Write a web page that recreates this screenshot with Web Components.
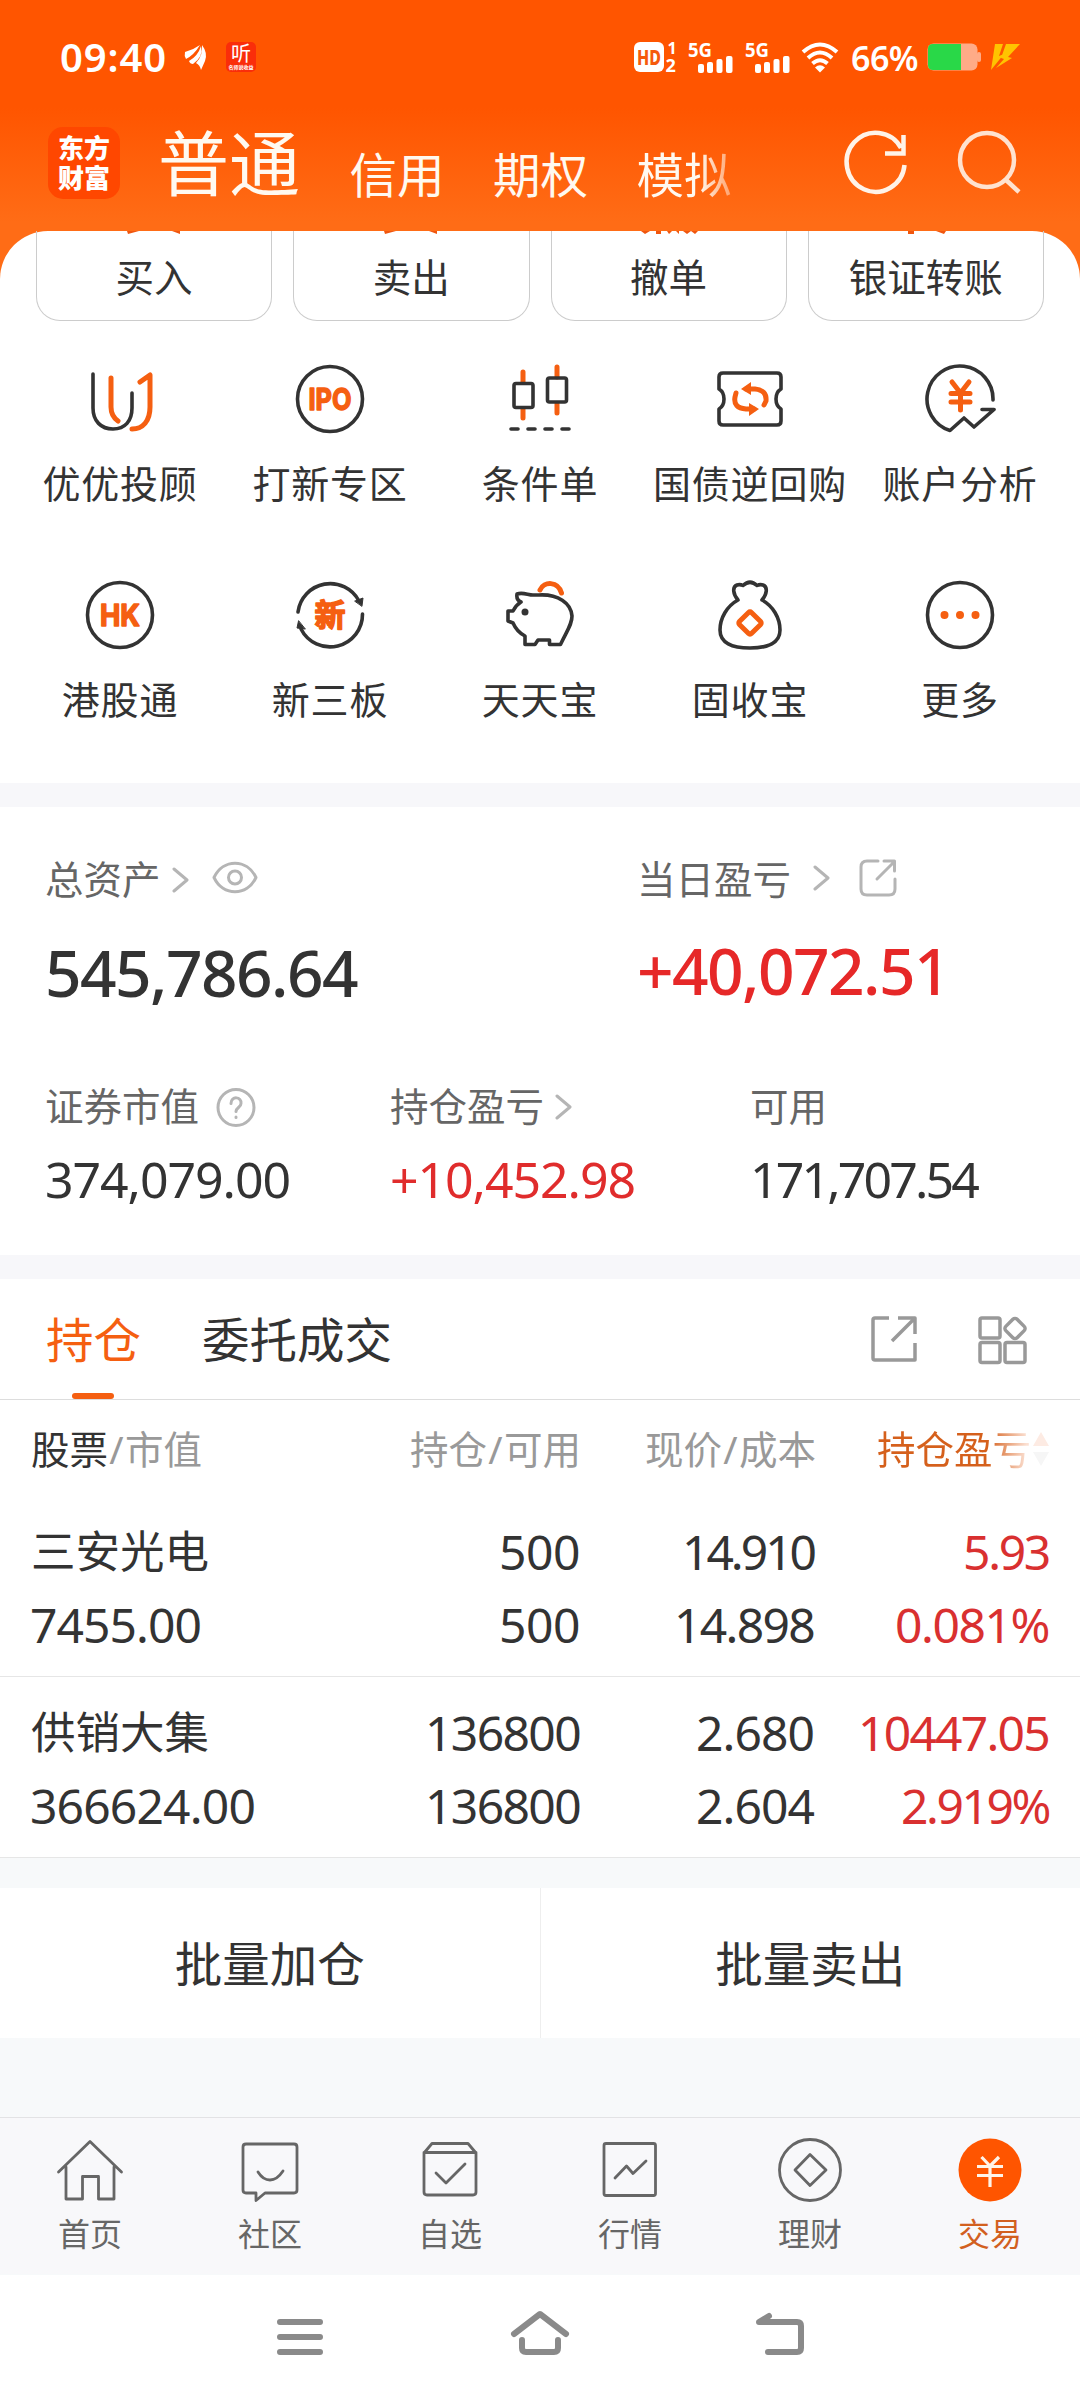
<!DOCTYPE html>
<html lang="zh-CN">
<head>
<meta charset="utf-8">
<title>交易</title>
<style>
    body {
        margin: 0;
        width: 1080px;
        height: 2400px;
        overflow: hidden;
        background: #fff;
        color: #333;
        font-family: "Noto Sans", "Noto Sans CJK SC", sans-serif;
    }
</style>
</head>
<body>
<trade-page></trade-page>

<script>
const ORANGE = "#f55f11";
const DARK = "#333";

// 84x72 icons, origin in the middle
const quickIcons = {
    uu: `<path d="M-27 -25V9C-27 22 -19 30 -7 30S12 22 12 9V-6"/>
        <path class="o" d="M-9 -21V8Q-9 17 -2 22M20 -17L30 -24V8C30 22 23 30 12 30"/>`,
    ipo: `<circle r="32.5"/><text y="11" font-size="30" textLength="43" lengthAdjust="spacingAndGlyphs">IPO</text>`,
    candle: `<path class="o" d="M-17 -27V-17M-17 10V19M17 -32V-22M17 5V14"/>
        <rect x="-26" y="-15.500" width="19" height="24" rx="2"/><rect x="7.500" y="-21" width="19" height="24" rx="2"/>
        <path d="M-29 30H-22M-12 30H-5M5 30H12M22 30H29"/>`,
    ticket: `<path d="M-27 -26H27Q31 -26 31 -22V-10Q26 -7 26 0T31 10V22Q31 26 27 26H-27Q-31 26 -31 22V10Q-26 7 -26 0T-31 -10V-22Q-31 -26 -27 -26Z"/>
        <path class="o" d="M-4 -10H5Q17 -9 16 2L14 6M4 10H-4Q-17 9 -15 -2L-14 -6"/>
        <path class="f" d="M-9 -10L1 -17V-4ZM9 10L-1 4V17Z"/>`,
    account: `<path d="M33 1A33 33 0 1 0 -10 31.500L4 19L14 28L34 10.500H22"/>
        <path class="o" d="M-8 -17L0.500 -6L9 -17M0.500 -6V11M-9 -5.500H10M-9 3H10"/>`,
    hk: `<circle r="32.5"/><text y="11" font-size="30" textLength="40" lengthAdjust="spacingAndGlyphs">HK</text>`,
    xin: `<path d="M-32 -3A32.500 32.500 0 0 1 29 -14M32.500 -1A32.500 32.500 0 0 1 -29 14"/>
        <path d="M25 -14L33 -17L32 -9ZM-25 14L-33 13L-31.500 6Z" fill="${DARK}" stroke-width="1"/>
        <text y="11" font-size="31" stroke-width="0.5">新</text>`,
    pig: `<path class="o" d="M0 -25C4 -34 18 -34 21.500 -22"/>
        <path d="M-23 -21C-17 -23 -12 -20 -7 -20L-1 -20C18 -21 31 -12 32 1C32 9 28 14 20.500 29.500H9.500V25H-2L-5 29.500H-15V21Q-23 17 -27 8L-32 6V-4H-27Q-24 -10 -19 -13Q-24 -15 -23 -21Z"/>
        <circle cx="-15" cy="-3" r="3.500" fill="${DARK}" stroke="none"/>`,
    bag: `<path d="M-12 -15C-17 -21 -18 -28 -13 -30Q-10 -31 -7 -29.500Q0 -36 7 -29.500Q10 -31 13 -30C18 -28 17 -21 12 -15C23 -9 30 3 30 15C30 28 18 33 0 33S-30 28 -30 15C-30 3 -23 -9 -12 -15Z"/>
        <rect class="o" x="-8.500" y="-8.500" width="17" height="17" rx="2" transform="translate(0 8) rotate(45)"/>`,
    more: `<circle r="32.5"/><path class="f" d="M-19.500 0a4 4 0 1 0 8 0a4 4 0 1 0-8 0M-4 0a4 4 0 1 0 8 0a4 4 0 1 0-8 0M11.500 0a4 4 0 1 0 8 0a4 4 0 1 0-8 0"/>`
};

const tabIcons = {
    home: `<path d="M-31.500 -1L0 -31.500L31.500 -1M-24 -6V26H-7.500V3.500H8.500V26H24V-6"/>`,
    chat: `<path d="M-24 -29H24Q27 -29 27 -26V17Q27 20 24 20H-5L-14 27.500V20H-24Q-27 20 -27 17V-26Q-27 -29 -24 -29Z"/><path d="M-12 -1Q-7 7 0 7T13 -2"/>`,
    star: `<path d="M-26 -20L-18 -29.500H18L26 -20M-26 -20.500H26V19Q26 22 23 22H-23Q-26 22 -26 19Z"/><path d="M-14 0L-4 10L15 -9"/>`,
    chart: `<rect x="-26" y="-29.500" width="51.500" height="52" rx="2"/><path d="M-15 5L-3.500 -7L3 0.500L16 -12"/>`,
    money: `<circle cy="-3" r="30.500"/><path d="M-15 -3L0 -18.500L16 -3L0 12.500Z"/>`,
    trade: `<circle cy="-3" r="31.500" fill="#ff5500" stroke="none"/><path d="M-8.500 -16L0 -7L9 -16M0 -7V14M-13 -6.500H13M-13 2.500H13" stroke="#fff3e8" stroke-width="3.200" stroke-linecap="butt"/>`
};

// Text stretched or tightened to a given width by its letter spacing
class NumText extends HTMLElement {

    constructor() {
        super();
        this.attachShadow({ mode: "open" });
    }

    connectedCallback() {
        this.shadowRoot.innerHTML = `
            <style>
                :host { display: inline-block; white-space: nowrap; }
                span { display: inline-block; }
            </style>
            <span><slot></slot></span>
        `
        const span = this.shadowRoot.querySelector("span");
        const want = Number(this.getAttribute("width"));
        const count = this.textContent.length;
        if (want) {
            const spacing = (want - span.getBoundingClientRect().width) / count;
            span.style.letterSpacing = spacing.toFixed(3) + "px";
        }
    }
}

class StatusBar extends HTMLElement {

    constructor() {
        super();
        this.attachShadow({ mode: "open" });
        this.render()
    }

    signal() {
        return `
            <svg width="46" height="32" viewBox="0 0 46 32" fill="#fff">
                <text x="0" y="15.500" font-size="20" font-weight="700" textLength="24" lengthAdjust="spacingAndGlyphs">5G</text>
                <rect x="10" y="23" width="6" height="9" rx="2"/><rect x="19" y="21" width="6" height="11" rx="2"/>
                <rect x="28.500" y="18" width="6" height="14" rx="2"/><rect x="38" y="15" width="6.500" height="17" rx="2"/>
            </svg>`
    }

    render() {
        this.shadowRoot.innerHTML = `
            <style>
                :host {
                    display: flex;
                    align-items: center;
                    height: 114px;
                    padding: 0 59px 0 60px;
                    box-sizing: border-box;
                    color: #fff;
                }
                svg { overflow: visible; }
                .time { font-size: 40px; font-weight: 600; line-height: 110px; width: 108px; }
                .right { margin-left: auto; display: flex; align-items: center; }
                .pct { font-size: 34px; font-weight: 600; line-height: 112px; width: 68px; margin: 2px 8px 0 12px; }
            </style>
            <div class="time"><num-text width="107">09:40</num-text></div>
            <svg width="24" height="28" viewBox="0 0 24 28" fill="#fff" style="margin-left:16px">
                <path d="M1 9Q9 7 16 2Q10 12 2 16Q0 13 1 9ZM5 18Q14 13 17 3Q20 13 9 21Q6 21 5 18ZM18 2Q24 10 21 18L17 27Q16 22 12 20Q19 13 18 2Z"/>
            </svg>
            <svg width="30" height="30" viewBox="0 0 30 30" fill="#fff" style="margin-left:18px">
                <rect width="30" height="30" rx="5" fill="#fa2d0a"/>
                <text x="15" y="18.500" font-size="20" text-anchor="middle">听</text>
                <text x="15" y="27" font-size="5" font-weight="700" text-anchor="middle">名师说收益</text>
            </svg>
            <div class="right">
                <svg width="43" height="32" viewBox="0 0 43 32">
                    <rect y="1" width="30" height="30" rx="6" fill="#fff"/>
                    <text x="3" y="24" font-size="22" font-weight="800" fill="#f55a0c" textLength="24" lengthAdjust="spacingAndGlyphs">HD</text>
                    <text x="33.500" y="12.500" font-size="16" font-weight="700" fill="#fff">1</text>
                    <text x="31.500" y="31" font-size="18" font-weight="700" fill="#fff">2</text>
                </svg>
                <span style="width:11px"></span>
                ${this.signal()}
                <span style="width:11px"></span>
                ${this.signal()}
                <svg width="38" height="32" viewBox="-19 -30 38 32" fill="none" stroke="#fff" stroke-width="4" style="margin-left:10px">
                    <path d="M-17 -19Q0 -34 17 -19M-12 -13Q0 -24 12 -13M-7.500 -7.500Q0 -14 7.500 -7.500"/>
                    <path d="M-5 -3.500Q0 -8 5 -3.500L0 1.500Z" fill="#fff" stroke="none"/>
                </svg>
                <div class="pct"><num-text width="67">66%</num-text></div>
                <svg width="55" height="28" viewBox="0 0 55 28">
                    <rect x="0.500" y="0.500" width="50" height="27" rx="6" fill="#ffab87"/>
                    <rect x="50" y="9" width="4" height="10" rx="2" fill="#ffab87"/>
                    <path d="M34 1V27H6Q1 27 1 22V6Q1 1 6 1Z" fill="#29d848"/>
                </svg>
                <svg width="31" height="27" viewBox="0 0 31 27" fill="#ffc400" style="margin-left:8px">
                    <path d="M5 0H13L9 12L14 10L1 26ZM16 0H30L18 13L22 14L6 24L14 15L11 14Z"/>
                </svg>
            </div>
        `
    }
}

class AppHeader extends HTMLElement {

    constructor() {
        super();
        this.attachShadow({ mode: "open" });
        this.render()
    }

    render() {
        this.shadowRoot.innerHTML = `
            <style>
                :host { display: flex; height: 117px; color: #fff9f0; box-sizing: border-box; padding: 0 46px 0 48px; }
                .logo {
                    width: 72px; height: 72px; box-sizing: border-box; margin-top: 13px; flex: none;
                    padding-top: 5px; border-radius: 15px; background: #ff4700; color: #fff;
                    font: 900 26px/30px "Noto Sans CJK SC"; text-align: center;
                }
                .modes { display: flex; align-items: flex-end; height: 91px; margin-left: 38px;
                    font-size: 47.500px; line-height: 64px; white-space: nowrap; }
                .modes b { font-weight: 400; font-size: 71px; line-height: 96px; margin-bottom: -6px; width: 143px; }
                .modes span { margin: 0 0 -2px 48.500px; }
                .modes span:last-child {
                    color: transparent; background: linear-gradient(90deg, #fff9f0 65%, #ffa06a 100%);
                    -webkit-background-clip: text; background-clip: text;
                }
                svg { display: block; flex: none; margin-left: auto; }
            </style>
            <div class="logo">东方<br>财富</div>
            <div class="modes"><b>普通</b><span>信用</span><span>期权</span><span>模拟</span></div>
            <svg width="200" height="90" viewBox="834 114 200 90" fill="none" stroke="#fff3e8" stroke-width="4.500">
                <path d="M904.500 165A29 29.500 0 1 1 901 148M903.500 135V153.500H885"/>
                <g stroke="#ffe2cf"><circle cx="987" cy="160" r="27"/><path d="M1005 179L1019 192"/></g>
            </svg>
        `
    }
}

class TradeButton extends HTMLElement {

    constructor() {
        super();
        this.attachShadow({ mode: "open" });
        this.shadowRoot.innerHTML = `
            <style>
                :host {
                    display: block; flex: 1; height: 90px; box-sizing: border-box;
                    border: 1px solid #ccc; border-top: 0; border-radius: 0 0 24px 24px;
                    text-align: center; font-size: 38.500px; line-height: 50px;
                }
                svg { display: block; margin: 0 auto; }
                div { margin-top: 17px; }
            </style>
            <svg width="80" height="4" viewBox="-40 0 80 4" fill="#f0560f"><path d="${this.getAttribute("peek")}"/></svg>
            <div><slot></slot></div>
        `
    }
}

class QuickEntry extends HTMLElement {

    constructor() {
        super();
        this.attachShadow({ mode: "open" });
        this.shadowRoot.innerHTML = `
            <style>
                :host { display: block; height: 216px; text-align: center; font-size: 38px; letter-spacing: 0.800px; text-indent: 0.800px; line-height: 50px; white-space: nowrap; }
                svg { display: block; margin: 0 auto 22.500px; fill: none; stroke: ${DARK}; stroke-width: 3.600; stroke-linecap: round; stroke-linejoin: round; letter-spacing: 0; }
                .o { stroke: ${ORANGE}; stroke-width: 5; }
                .f { fill: ${ORANGE}; stroke: none; }
                text { fill: ${ORANGE}; stroke: ${ORANGE}; stroke-width: 1.500; font-weight: 700; text-anchor: middle; font-family: Inter, "Noto Sans CJK SC", sans-serif; }
            </style>
            <svg width="84" height="72" viewBox="-42 -36 84 72">${quickIcons[this.getAttribute("icon")]}</svg>
            <slot></slot>
        `
    }
}

class AssetFigure extends HTMLElement {

    constructor() {
        super();
        this.attachShadow({ mode: "open" });
        this.shadowRoot.innerHTML = `
            <style>
                :host { display: block; }
                .label { display: flex; align-items: center; height: 50px; font-size: 38.500px; line-height: 48px; color: #666; }
                .label span { margin-top: -3px; }
                .value { font-size: 50px; line-height: 60px; margin-top: 17px; }
                :host([big]) .value { font-size: 64px; font-weight: 500; line-height: 80px; margin-top: 28px; }
                :host([up]) .value { color: #e02c2c; }
                :host([big][up]) .value { margin-top: 26px; color: #e62828; }
            </style>
            <div class="label"><span>${this.getAttribute("label")}</span><slot></slot></div>
            <div class="value"><num-text width="${this.getAttribute("width")}">${this.getAttribute("value")}</num-text></div>
        `
    }
}

class HoldingRow extends HTMLElement {

    constructor() {
        super();
        this.attachShadow({ mode: "open" });
        this.render()
    }

    cell(text, width) {
        return `<num-text width="${width}">${text}</num-text>`
    }

    render() {
        const top = this.getAttribute("top").split("|");
        const bottom = this.getAttribute("bottom").split("|");
        const wTop = this.getAttribute("wtop").split("|");
        const wBottom = this.getAttribute("wbottom").split("|");
        this.shadowRoot.innerHTML = `
            <style>
                :host {
                    display: grid; grid-template-columns: 300px 250px 234px 235px; grid-template-rows: 73px 73px;
                    height: 181px; box-sizing: border-box; padding: 21px 31px 0 30px;
                    border-bottom: 1px solid #e6e6e6; font-size: 48px; line-height: 70px; text-align: right;
                }
                .l { text-align: left; }
                .name { font-size: 44.500px; line-height: 68px; padding-left: 1px; }
                .up { color: #d93030; }
            </style>
            <div class="l name">${top[0]}</div>
            <div>${this.cell(top[1], wTop[0])}</div>
            <div>${this.cell(top[2], wTop[1])}</div>
            <div class="up">${this.cell(top[3], wTop[2])}</div>
            <div class="l">${this.cell(bottom[0], wBottom[0])}</div>
            <div>${this.cell(bottom[1], wBottom[1])}</div>
            <div>${this.cell(bottom[2], wBottom[2])}</div>
            <div class="up">${this.cell(bottom[3], wBottom[3])}</div>
        `
    }
}

class TabItem extends HTMLElement {

    constructor() {
        super();
        this.attachShadow({ mode: "open" });
        this.shadowRoot.innerHTML = `
            <style>
                :host { display: block; flex: 1; text-align: center; font-size: 32px; line-height: 44px; color: #666; }
                :host([active]) { color: #d2601f; }
                svg { display: block; margin: 19px auto 3px; fill: none; stroke: #666; stroke-width: 2.800; stroke-linecap: round; stroke-linejoin: round; }
            </style>
            <svg width="72" height="72" viewBox="-36 -36 72 72">${tabIcons[this.getAttribute("icon")]}</svg>
            <slot></slot>
        `
    }
}

class SystemNav extends HTMLElement {

    constructor() {
        super();
        this.attachShadow({ mode: "open" });
        this.shadowRoot.innerHTML = `
            <style>
                :host { display: flex; justify-content: center; align-items: center; gap: 180px; height: 124px; background: #fff; }
                svg { fill: none; stroke: #8a8a8a; stroke-width: 6; stroke-linecap: round; stroke-linejoin: round; }
            </style>
            <svg width="60" height="60" viewBox="270 2307 60 60"><path d="M280 2322H320M280 2337H320M280 2352H320"/></svg>
            <svg width="60" height="60" viewBox="510 2307 60 60"><path d="M514 2334L540 2314L566 2334M522 2340V2348Q522 2352 526 2352H554Q558 2352 558 2348V2340"/></svg>
            <svg width="60" height="60" viewBox="750 2307 60 60"><path d="M768 2352H797Q801 2352 801 2348V2326Q801 2322 797 2322H759L769 2316"/></svg>
        `
    }
}

class TradePage extends HTMLElement {

    constructor() {
        super();
        this.attachShadow({ mode: "open" });
        this.render()
    }

    chevron(left, dy) {
        return `<svg width="18" height="28" viewBox="0 0 18 28" style="margin-left:${left}px;transform:translateY(${dy}px)"><path d="M2 3L15 14L2 25"/></svg>`
    }

    render() {
        this.shadowRoot.innerHTML = `
            <style>
                :host { display: block; width: 1080px; height: 2400px; overflow: hidden; }
                svg { fill: none; stroke: #b5b5b5; stroke-width: 3; stroke-linecap: round; stroke-linejoin: round; flex: none; }
                .top { background: linear-gradient(#ff5500 0, #ff5500 108px, #ff6c16 222px, #ff6c16 300px); }
                .sheet { background: #fff; border-radius: 48px 48px 0 0; height: 552px; }
                .actions { display: flex; gap: 21px; padding: 0 36px; }
                .quick { display: grid; grid-template-columns: repeat(5, 210px); padding: 42px 15px 0; }
                .band { height: 24px; background: #f7f7fa; }
                .assets { height: 448px; box-sizing: border-box; padding: 48px 45px 0; }
                .row { display: flex; }
                .row.second { margin-top: 69px; }
                .tabs { display: flex; height: 120px; border-bottom: 1px solid #ddd; padding: 0 49px 0 46px; font-size: 47.500px; line-height: 122px; white-space: nowrap; }
                .on { color: ${ORANGE}; width: 96px; height: 120px; margin-right: 60px; }
                .on i { display: block; width: 42px; height: 6px; border-radius: 3px; background: ${ORANGE}; margin: -8px 0 0 26px; }
                .tabs svg { stroke: #999; margin-top: 34px; }
                .thead { display: grid; grid-template-columns: 300px 250px 235px 234px; height: 96px; padding: 0 30px 0 31px; font-size: 38.500px; line-height: 98px; color: #999; text-align: right; }
                .thead > :first-child { text-align: left; }
                .thead b { font-weight: 400; color: #333; }
                .thead u { text-decoration: none; padding: 0 1.300px; }
                .sort { display: flex; align-items: center; justify-content: flex-end; white-space: nowrap; }
                .sort span { color: transparent; background: linear-gradient(90deg, #d5601c 72%, #fbe0d2 97%); -webkit-background-clip: text; background-clip: text; margin-right: 1px; }
                .sort svg { stroke: none; }
                .batch { display: flex; height: 150px; margin-top: 30px; background: #fff; font-size: 47.500px; line-height: 152px; text-align: center; }
                .batch div { flex: 1; }
                .batch div + div { border-left: 1px solid #eee; }
                .bottom { background: #f7f9fa; height: 417px; overflow: hidden; }
                .nav { display: flex; height: 156px; border-top: 1px solid #e3e3e5; background: #f8f8fa; margin-top: 79px; }
            </style>
            <div class="top">
                <status-bar></status-bar>
                <app-header></app-header>
                <div class="sheet">
                    <div class="actions">
                        <trade-button peek="M-27 0H-15L-26 3ZM18 0H26V3Z">买入</trade-button>
                        <trade-button peek="M-27 0H-15L-26 3ZM18 0H26V3Z">卖出</trade-button>
                        <trade-button peek="M-28 0H-19L-24 3ZM-13 0H-8V3H-13ZM-2 0H3L0 3ZM7 0H10V3ZM14 0H29L26 3L22 0L18 3Z">撤单</trade-button>
                        <trade-button peek="M-18 0H-12V3H-18ZM10 0H20L18 3Z">银证转账</trade-button>
                    </div>
                    <div class="quick">
                        <quick-entry icon="uu">优优投顾</quick-entry>
                        <quick-entry icon="ipo">打新专区</quick-entry>
                        <quick-entry icon="candle">条件单</quick-entry>
                        <quick-entry icon="ticket">国债逆回购</quick-entry>
                        <quick-entry icon="account">账户分析</quick-entry>
                        <quick-entry icon="hk">港股通</quick-entry>
                        <quick-entry icon="xin">新三板</quick-entry>
                        <quick-entry icon="pig">天天宝</quick-entry>
                        <quick-entry icon="bag">固收宝</quick-entry>
                        <quick-entry icon="more">更多</quick-entry>
                    </div>
                </div>
            </div>
            <div class="band"></div>
            <div class="assets">
                <div class="row">
                    <asset-figure big label="总资产" value="545,786.64" width="312" style="width:592px">
                        ${this.chevron(11, 0)}
                        <svg width="46" height="34" viewBox="-23 -17 46 34" style="margin-left:22px;transform:translateY(-2.500px)">
                            <path d="M-21 0C-12 -19 12 -19 21 0C12 19 -12 19 -21 0Z"/><circle r="6.500"/>
                        </svg>
                    </asset-figure>
                    <asset-figure big up label="当日盈亏" value="+40,072.51" width="312">
                        ${this.chevron(22, -2)}
                        <svg width="40" height="40" viewBox="0 0 40 40" style="margin-left:27px;transform:translateY(-2px)">
                            <path d="M20 3H9Q3 3 3 9V31Q3 37 9 37H31Q37 37 37 31V21M26 3H36.500V13M36 4L19 21"/>
                        </svg>
                    </asset-figure>
                </div>
                <div class="row second">
                    <asset-figure label="证券市值" value="374,079.00" width="245" style="width:345px">
                        <svg width="42" height="42" viewBox="-21 -21 42 42" style="margin-left:16px;transform:translateY(0.500px)">
                            <circle r="18"/><path d="M-5 -4C-5 -12 6 -11 5 -4C5 0 0 0 0 4M0 9.500V10"/>
                        </svg>
                    </asset-figure>
                    <asset-figure up label="持仓盈亏" value="+10,452.98" width="245" style="width:360px">${this.chevron(11, 0)}</asset-figure>
                    <asset-figure label="可用" value="171,707.54" width="227"></asset-figure>
                </div>
            </div>
            <div class="band"></div>
            <div class="tabs">
                <div class="on">持仓<i></i></div>
                <div>委托成交</div>
                <svg width="50" height="54" viewBox="869 1313 50 54" style="margin-left:auto;stroke-width:3.500;stroke-linecap:butt">
                    <path d="M889 1318H875Q873 1318 873 1320V1358Q873 1360 875 1360H915V1343M898 1318H915V1334M915 1318L892 1341"/>
                </svg>
                <svg width="56" height="54" viewBox="975 1313 56 54" style="margin-left:56px;stroke-width:3.500">
                    <rect x="980" y="1318" width="20" height="20" rx="2"/><rect x="980" y="1342.500" width="20" height="20" rx="2"/>
                    <rect x="1005" y="1342.500" width="20" height="20" rx="2"/>
                    <rect x="-8" y="-8" width="16" height="16" rx="3" transform="translate(1015 1328.500) rotate(45)"/>
                </svg>
            </div>
            <div class="thead">
                <div><b>股票</b><u>/</u>市值</div>
                <div>持仓<u>/</u>可用</div>
                <div>现价<u>/</u>成本</div>
                <div class="sort"><span>持仓盈亏</span><svg width="18" height="36" viewBox="0 0 18 36"><path d="M1 15L9 1L17 15Z" fill="#fdebe3"/><path d="M1 21L9 35L17 21Z" fill="#f6f6f6"/></svg></div>
            </div>
            <holding-row top="三安光电|500|14.910|5.93" bottom="7455.00|500|14.898|0.081%"
                wtop="81|132|86" wbottom="171|81|140|154"></holding-row>
            <holding-row top="供销大集|136800|2.680|10447.05" bottom="366624.00|136800|2.604|2.919%"
                wtop="155|118|191" wbottom="225|155|118|148"></holding-row>
            <div class="bottom">
                <div class="batch"><div>批量加仓</div><div>批量卖出</div></div>
                <div class="nav">
                    <tab-item icon="home">首页</tab-item>
                    <tab-item icon="chat">社区</tab-item>
                    <tab-item icon="star">自选</tab-item>
                    <tab-item icon="chart">行情</tab-item>
                    <tab-item icon="money">理财</tab-item>
                    <tab-item icon="trade" active>交易</tab-item>
                </div>
            </div>
            <system-nav></system-nav>
        `
    }
}

customElements.define("status-bar", StatusBar);
customElements.define("app-header", AppHeader);
customElements.define("trade-button", TradeButton);
customElements.define("quick-entry", QuickEntry);
customElements.define("asset-figure", AssetFigure);
customElements.define("holding-row", HoldingRow);
customElements.define("tab-item", TabItem);
customElements.define("system-nav", SystemNav);
customElements.define("trade-page", TradePage);
customElements.define("num-text", NumText);
</script>
</body>
</html>
